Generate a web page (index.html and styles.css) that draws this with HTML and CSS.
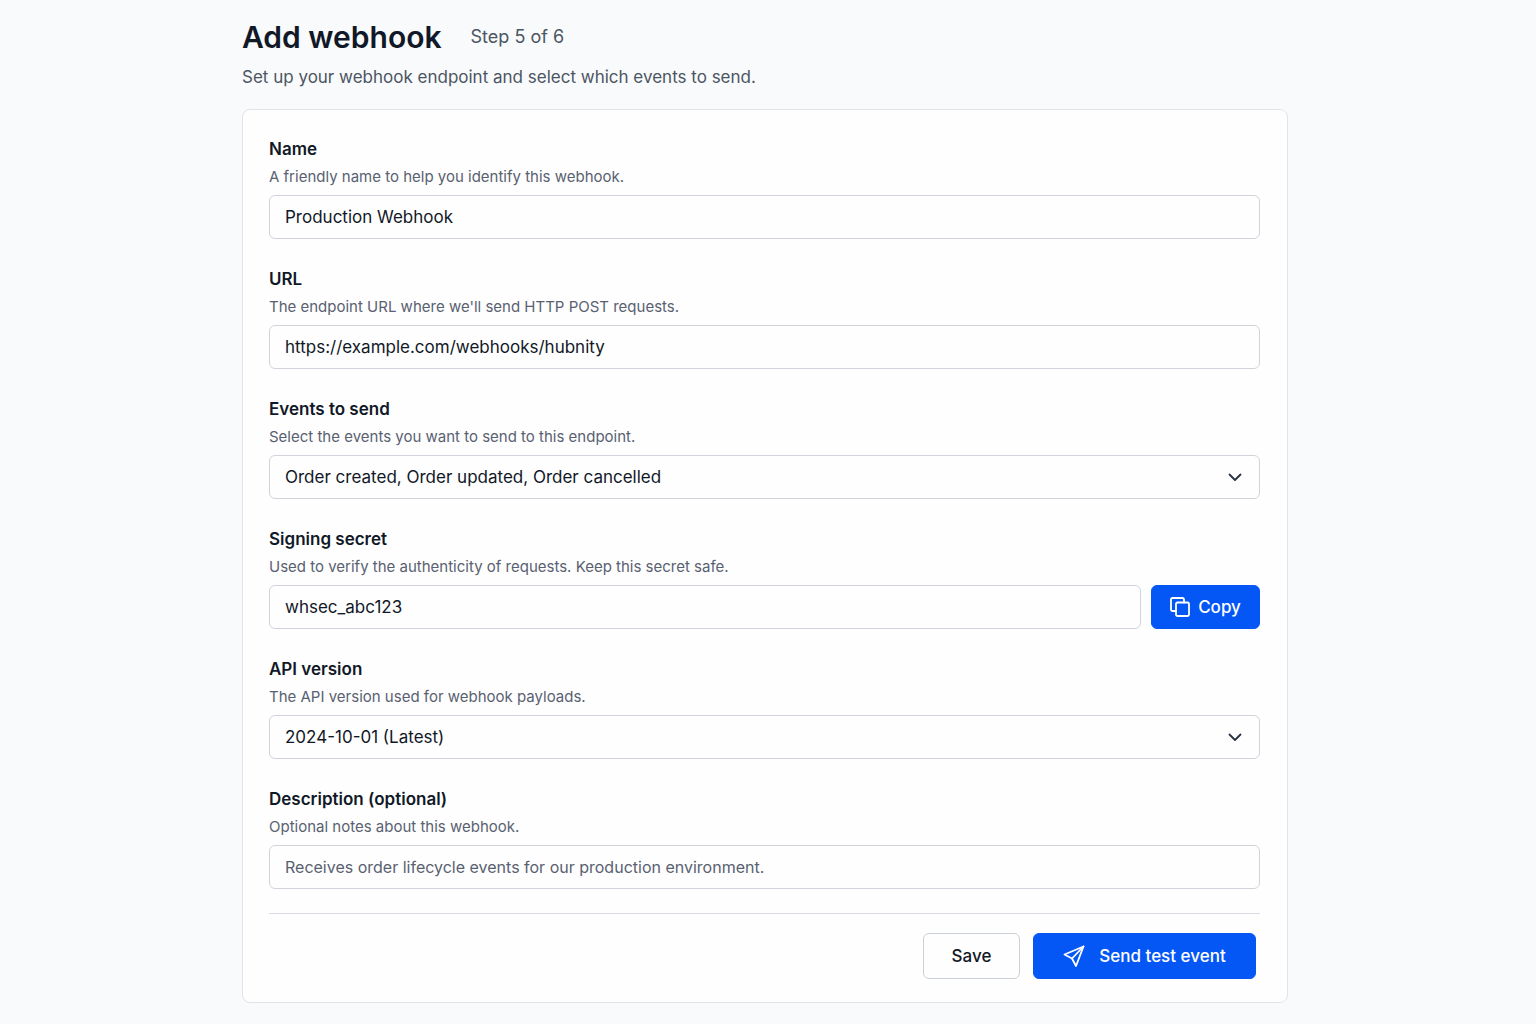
FILE: index.html
```html
<!DOCTYPE html>
<html lang="en">
<head>
<meta charset="utf-8">
<meta name="viewport" content="width=device-width, initial-scale=1">
<title>Add webhook</title>
<link rel="stylesheet" href="styles.css">
</head>
<body>
<main class="page">
  <header class="page-header">
    <div class="title-row">
      <h1 class="title">Add webhook</h1>
      <span class="step">Step 5 of 6</span>
    </div>
    <p class="subtitle">Set up your webhook endpoint and select which events to send.</p>
  </header>
  <form class="card">
    <div class="field">
      <label class="label" for="name">Name</label>
      <p class="hint" id="name-hint">A friendly name to help you identify this webhook.</p>
      <input class="control" id="name" type="text" value="Production Webhook" aria-describedby="name-hint">
    </div>
    <div class="field">
      <label class="label" for="url">URL</label>
      <p class="hint" id="url-hint">The endpoint URL where we'll send HTTP POST requests.</p>
      <input class="control" id="url" type="url" value="https://example.com/webhooks/hubnity" aria-describedby="url-hint">
    </div>
    <div class="field">
      <label class="label" for="events">Events to send</label>
      <p class="hint" id="events-hint">Select the events you want to send to this endpoint.</p>
      <div class="select">
        <select class="control" id="events" aria-describedby="events-hint">
          <option>Order created, Order updated, Order cancelled</option>
        </select>
        <svg class="chevron" viewBox="0 0 16 16" aria-hidden="true"><path d="M2.500 5.500L8 11l5.500-5.500"/></svg>
      </div>
    </div>
    <div class="field">
      <label class="label" for="secret">Signing secret</label>
      <p class="hint" id="secret-hint">Used to verify the authenticity of requests. Keep this secret safe.</p>
      <div class="secret-row">
        <input class="control" id="secret" type="text" value="whsec_abc123" aria-describedby="secret-hint">
        <button class="button primary copy" type="button">
          <svg class="copy-icon" viewBox="0 0 20 20" aria-hidden="true"><rect x="6" y="5.500" width="13" height="13.500" rx="1.500"/><path d="M6 14H2.500A1.500 1.500 0 0 1 1 12.500v-10A1.500 1.500 0 0 1 2.500 1h10A1.500 1.500 0 0 1 14 2.500v3"/></svg>
          Copy
        </button>
      </div>
    </div>
    <div class="field">
      <label class="label" for="version">API version</label>
      <p class="hint" id="version-hint">The API version used for webhook payloads.</p>
      <div class="select">
        <select class="control" id="version" aria-describedby="version-hint">
          <option>2024-10-01 (Latest)</option>
        </select>
        <svg class="chevron" viewBox="0 0 16 16" aria-hidden="true"><path d="M2.500 5.500L8 11l5.500-5.500"/></svg>
      </div>
    </div>
    <div class="field">
      <label class="label" for="description">Description (optional)</label>
      <p class="hint" id="description-hint">Optional notes about this webhook.</p>
      <input class="control" id="description" type="text" placeholder="Receives order lifecycle events for our production environment." aria-describedby="description-hint">
    </div>
    <div class="actions">
      <button class="button save" type="submit">Save</button>
      <button class="button primary send" type="button">
        <svg class="send-icon" viewBox="0 0 22 22" aria-hidden="true"><path d="M20.500 1.500L1.500 9.500l7.500 4 4 7.500z"/><path d="M9 13.500L20.500 1.500"/></svg>
        Send test event
      </button>
    </div>
  </form>
</main>
</body>
</html>
```

FILE: styles.css
```css
*, *::before, *::after { box-sizing: border-box; }

body {
  margin: 0;
  background: #f9fafb;
  color: #111827;
  font-family: Inter, "Liberation Sans", sans-serif;
}

.page {
  max-width: 1094px;
  margin: 0 auto;
  padding: 16px 27px 20px 21px;
}

.title-row { display: flex; align-items: center; gap: 29px; }
.title { margin: 0; font-size: 30px; line-height: 40px; font-weight: 600; }
.step { color: #4b5563; font-size: 18px; line-height: 42px; }
.subtitle { margin: 7px 0 20px; color: #4b5563; font-size: 17px; line-height: 24px; }

.card {
  padding: 27px 27px 23px 26px;
  border: 1px solid #e1e4e8;
  border-radius: 8px;
  background: #fefefe;
}

.field { margin-bottom: 28px; }
.label { display: block; font-size: 17px; line-height: 24px; font-weight: 600; }
.hint { margin: 4px 0 6px; color: #596171; font-size: 15px; line-height: 24px; }

.control {
  display: block;
  width: 100%;
  height: 44px;
  padding: 0 15px;
  border: 1px solid #d0d4da;
  border-radius: 6px;
  background: #fefefe;
  color: #111827;
  font: inherit;
  font-size: 17px;
  appearance: none;
}
.control::placeholder { color: #596171; font-size: 16px; opacity: 1; }

.select { display: grid; align-items: center; }
.select > * { grid-area: 1 / 1; }
.chevron {
  justify-self: end;
  width: 16px;
  height: 16px;
  margin-right: 17px;
  color: #283241;
  pointer-events: none;
}
svg { fill: none; stroke: currentColor; stroke-width: 1.800; stroke-linecap: round; stroke-linejoin: round; }

.secret-row { display: flex; gap: 10px; }
.secret-row .control { flex: 1; }

.button {
  display: inline-flex;
  align-items: center;
  justify-content: center;
  height: 46px;
  border: 1px solid #cbd1d9;
  border-radius: 6px;
  background: #fefefe;
  color: #111827;
  font: inherit;
  font-size: 17px;
  font-weight: 500;
}
.primary { border-color: #0557f5; background: #0557f5; color: #fff; }
.copy { height: 44px; width: 109px; gap: 8px; }
.copy-icon { width: 20px; height: 20px; }
.save { width: 97px; }
.send { width: 223px; gap: 14px; }
.send-icon { width: 22px; height: 22px; }

.actions {
  display: flex;
  justify-content: flex-end;
  gap: 13px;
  margin-top: -4px;
  padding: 19px 4px 0 0;
  border-top: 1px solid #d9dde3;
}
```
